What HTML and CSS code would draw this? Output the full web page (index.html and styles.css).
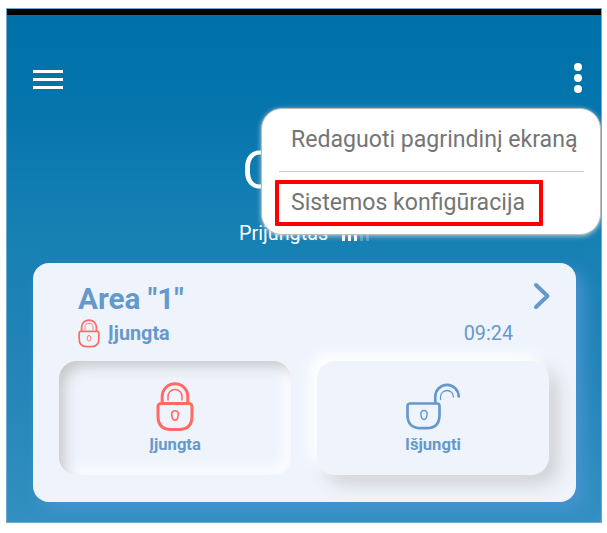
FILE: index.html
```html
<!DOCTYPE html>
<html lang="lt">
<head>
<meta charset="utf-8">
<title>Area</title>
<link rel="stylesheet" href="styles.css">
</head>
<body>
<svg class="defs" width="0" height="0" aria-hidden="true">
  <symbol id="lock" viewBox="0 0 38 50">
    <path d="M6.200 21V14.500a12.800 12.800 0 0 1 25.600 0V21" stroke-width="3"/>
    <path d="M12 18v-3.500a7 7 0 0 1 14 0V18" stroke-width="1.500"/>
    <path d="M5 21.500h28a3 3 0 0 1 3 3V34q0 13.500-13 13.500h-8Q2 47.500 2 34v-9.500a3 3 0 0 1 3-3Z" stroke-width="3"/>
    <path d="M19 28.800c2.300 0 3.600 1.600 3.300 3.900-.3 3-1.400 5.600-3.300 5.600s-3-2.600-3.300-5.600c-.3-2.300 1-3.900 3.300-3.900Z" stroke-width="1.600"/>
  </symbol>
</svg>
<main class="app">
  <header class="topbar">
    <div class="burger"><i></i><i></i><i></i></div>
    <div class="more"><i></i><i></i><i></i>
      <nav class="menu">
        <div class="item"><span>Redaguoti pagrindinį ekraną</span></div>
        <div class="item marked"><span>Sistemos konfigūracija</span></div>
      </nav>
    </div>
  </header>
  <section class="status">
    <h1>C</h1>
    <div class="link"><span>Prijungtas</span><span class="signal"><i></i><i></i><i></i><i></i><i></i></span></div>
  </section>
  <section class="card">
    <div class="head">
      <h2>Area "1"</h2>
      <svg class="chevron" viewBox="0 0 18 28"><path d="M3 3l11.500 11L3 25"/></svg>
    </div>
    <div class="state">
      <svg class="small-lock"><use href="#lock"/></svg>
      <b>Įjungta</b>
      <time>09:24</time>
    </div>
    <div class="buttons">
      <div class="btn pressed">
        <svg class="lock"><use href="#lock"/></svg>
        <span>Įjungta</span>
      </div>
      <div class="btn raised">
        <svg class="unlock" viewBox="0 0 54 50">
          <path d="M29.300 21V14.500a11.700 11.700 0 0 1 23.400 0" stroke-width="2.700"/>
          <path d="M34.500 17.500v-2.500a6.500 6.500 0 0 1 13 0" stroke-width="1.300"/>
          <path d="M4 21.500h27a2.500 2.500 0 0 1 2.500 2.500v9q0 13.200-13 13.200h-6Q1.500 46.200 1.500 33v-9A2.500 2.500 0 0 1 4 21.500Z" stroke-width="2.700"/>
          <path d="M18 28.600c2.300 0 3.400 1.600 3.100 3.900-.3 2.800-1.300 5-3.100 5s-2.800-2.200-3.100-5c-.3-2.300.8-3.900 3.100-3.900Z" stroke-width="1.500"/>
        </svg>
        <span>Išjungti</span>
      </div>
    </div>
  </section>
</main>
</body>
</html>
```

FILE: styles.css
```css
* { box-sizing: border-box; }
body {
  margin: 0;
  background: #fff;
  font-family: Roboto, sans-serif;
  overflow: hidden;
}
.defs { position: absolute; }
svg { display: block; fill: none; stroke: currentColor; stroke-linecap: round; stroke-linejoin: round; }
.app {
  width: 596px;
  height: 515px;
  margin: 8px 0 0 6px;
  border: 1px solid #6fa9d0;
  background: linear-gradient(#000 6px, #0070a8 6px, #0474ac 90px, #1680b3 220px, #2485b8 370px, #3390c0 100%);
  overflow: hidden;
}
.topbar {
  display: flex;
  justify-content: space-between;
  padding: 54px 19px 0 26px;
  height: 94px;
}
.burger { display: grid; gap: 5px; align-content: start; padding-top: 7px; }
.burger i { width: 30px; height: 3px; background: #fff; }
.more { position: relative; width: 8px; display: grid; gap: 3px; align-content: start; }
.more > i { width: 8px; height: 8px; border-radius: 50%; background: #fff; }
.menu {
  position: absolute;
  z-index: 2;
  top: 45px;
  right: -19px;
  width: 340px;
  height: 127px;
  padding: 0 16px 0 13px;
  border: 1px solid #bbb;
  border-radius: 21px;
  background: #fff;
  box-shadow: 0 1px 5px rgba(220, 220, 220, .8);
  color: #757575;
  font-size: 23.100px;
  line-height: 28px;
  white-space: nowrap;
}
.item { height: 63px; padding: 17px 0 0 12px; margin-left: 4px; border-bottom: 1px solid #c8c8c8; }
.item.marked {
  width: 268px;
  height: 46px;
  margin: 8px 0 0 0;
  padding: 5px 0 0 12px;
  border: 4px solid #f00;
  border-radius: 1px;
}
.status { height: 160px; color: #fff; padding: 0 0 0 232px; }
.status h1 { margin: 0; padding: 36px 0 0 3px; font-weight: 400; font-size: 52px; line-height: 64px; }
.link { display: flex; align-items: flex-end; gap: 14px; margin-top: 19px; font-size: 19.800px; line-height: 24px; }
.signal { display: flex; align-items: flex-end; gap: 3px; height: 24px; padding-bottom: 5px; }
.signal i { width: 3px; height: 8px; background: #fff; }
.signal i:nth-child(n+4) { opacity: .25; }
.card {
  width: 543px;
  height: 239px;
  margin-left: 26px;
  border-radius: 16px;
  background: #eff4fc;
  box-shadow: 8px 8px 16px #4792d0;
  color: #6699cb;
  padding: 18px 26px 0;
}
.head { display: flex; justify-content: space-between; height: 36px; padding-left: 19px; }
h2 { margin: 0; font-size: 29.700px; line-height: 36px; font-weight: 700; }
.chevron { width: 18px; height: 28px; margin: 1px -1px 0 0; stroke-width: 4; }
.state { display: flex; align-items: center; height: 32px; padding: 1px 37px 0 19px; }
.small-lock { width: 22px; height: 29px; color: #fe6a65; margin-right: 8px; }
.state b { font-size: 19.800px; font-weight: 700; }
.state time { margin-left: auto; font-size: 19.800px; }
.buttons { display: flex; gap: 26px; margin-top: 12px; }
.btn {
  width: 232px;
  height: 114px;
  border-radius: 18px;
  background: #eff4fc;
  display: flex;
  flex-direction: column;
  align-items: center;
  padding-top: 21px;
  font-size: 16.600px;
  font-weight: 700;
  line-height: 20px;
}
.btn span { margin-top: 3px; }
.pressed { box-shadow: inset 8px 8px 14px -3px #c6c7c9, inset -8px -8px 10px #fafbff; }
.raised { box-shadow: -7px -7px 14px #fff, 9px 9px 18px #cfd0d3; }
.lock { width: 38px; height: 50px; color: #fe6a65; }
.unlock { width: 54px; height: 50px; }
```
